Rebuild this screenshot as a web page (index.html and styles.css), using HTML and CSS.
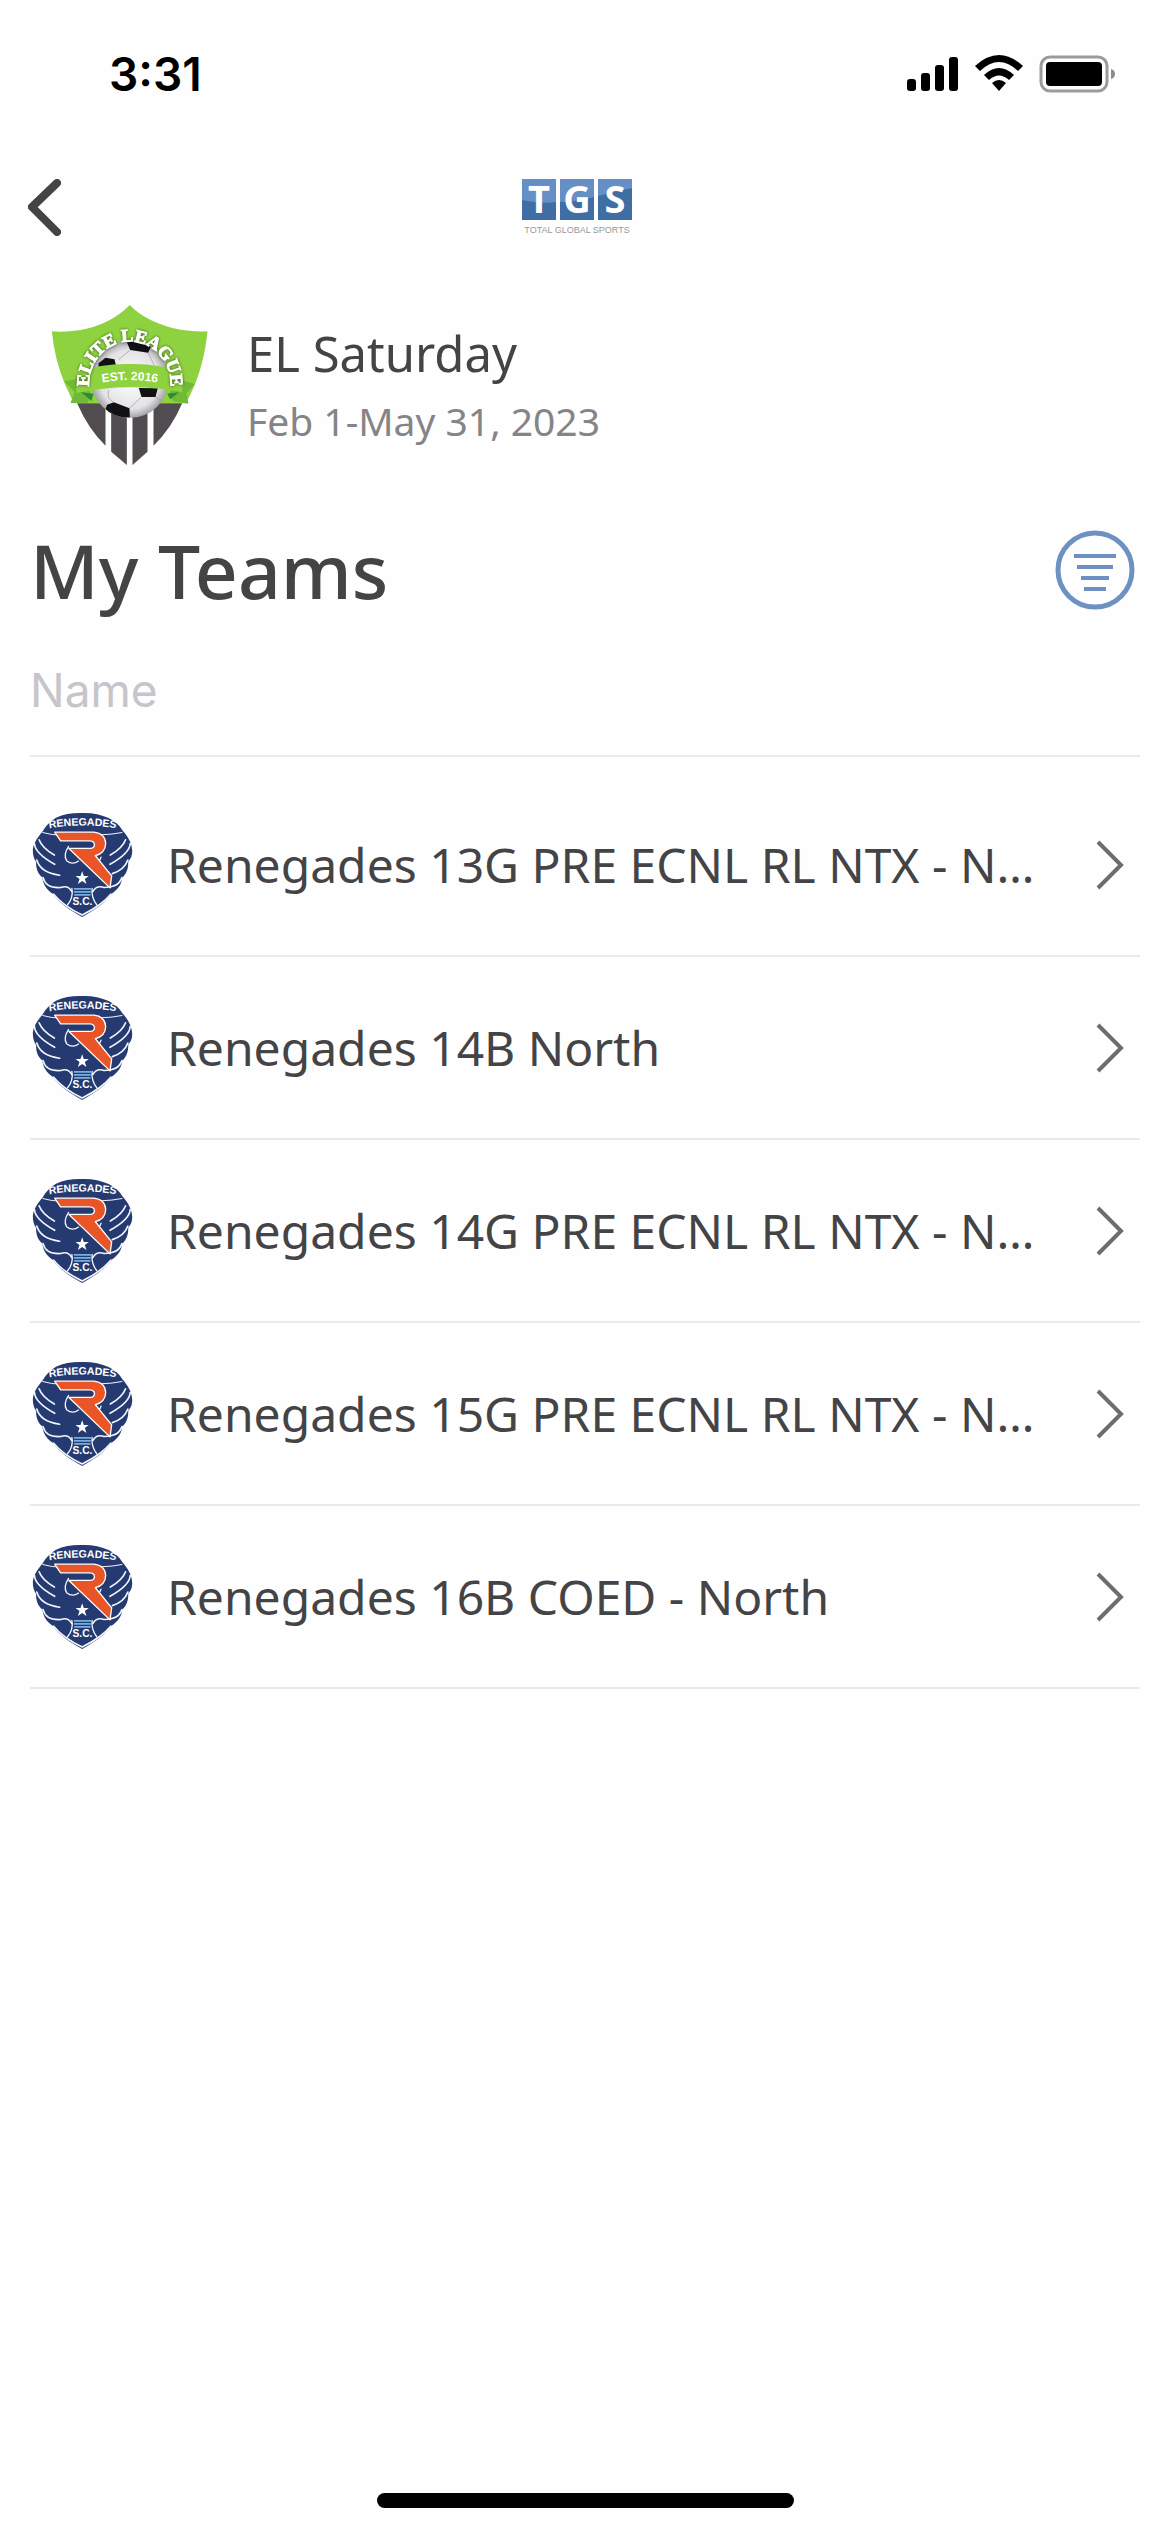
FILE: index.html
```html
<!DOCTYPE html>
<html lang="en">
<head>
    <meta charset="utf-8">
    <meta name="viewport" content="width=device-width, initial-scale=1">
    <title>My Teams</title>
    <link rel="stylesheet" href="styles.css">
</head>
<body>
    <!-- shared icons -->
    <svg class="sprite" aria-hidden="true">
        <symbol id="crest" viewBox="36 60 304 320">
            <path d="M187 63C216 62 244 68 267 78C285 87 299 98 309 116C323 131 337 153 338 176C339 190 334 202 326 210C327 232 319 248 308 258C306 279 294 295 277 306C254 337 222 357 187 377C152 358 120 337 98 307C80 295 69 279 67 258C54 247 47 231 48 211C37 195 35 172 43 155C50 139 60 128 68 118C75 103 89 89 108 77C132 66 160 62 187 63Z" fill="#253a70"/>
            <g fill="none" stroke="#f3f6fc" stroke-width="5" stroke-linecap="round">
                <path d="M68 122Q120 137 184 125Q246 134 307 122" stroke-width="3"/>
                <path d="M43 155Q44 184 104 218M50 205Q61 243 119 251M69 258Q77 291 123 288Q144 280 156 300"/>
                <path d="M57 144Q66 169 103 190"/>
                <path d="M332 155Q331 184 271 218M325 205Q314 235 278 246M307 258Q298 288 253 288Q231 280 219 300"/>
                <path d="M318 144Q309 169 272 190"/>
                <path d="M101 308Q128 342 187 371Q246 342 274 308"/>
                <path d="M156 291Q161 318 143 340M217 291Q214 318 231 340" stroke-width="4"/>
                <path d="M146 164Q129 190 140 207Q158 221 176 208" stroke-width="4"/>
                <path d="M220 209Q240 214 244 196" stroke-width="4"/>
            </g>
            <path d="M104 121H222Q256 124 258 155Q257 184 227 192L276 253L271 289L147 170H213Q224 168 224 158Q223 148 211 147H122Z" fill="#ea5527" stroke="#fff" stroke-width="4" stroke-linejoin="round"/>
            <path d="M187 239L192 253H207L195 262L200 277L187 268L174 277L179 262L167 253H182Z" fill="#fff"/>
            <path d="M162 292H214M162 301H213M163 310H212" stroke="#77aee0" stroke-width="5"/>
            <path id="crestArc" d="M70 112Q187 90 307 112" fill="none"/>
            <text class="crest-name"><textPath href="#crestArc" startOffset="50%">RENEGADES</textPath></text>
            <text class="crest-sc" x="188" y="341">S.C.</text>
        </symbol>
        <symbol id="chevron" viewBox="0 0 28 50">
            <path d="M2 2L25 25L2 48" fill="none" stroke="#6d6c6e" stroke-width="4"/>
        </symbol>
    </svg>

    <div class="screen">
        <div class="status">
            <span class="clock">3:31</span>
            <svg class="status-icons" viewBox="907 54 209 40" role="img" aria-label="Signal, wifi and battery">
                <rect x="907" y="79" width="9" height="12" rx="3"/>
                <rect x="921" y="73" width="9" height="18" rx="3"/>
                <rect x="935" y="65" width="9" height="26" rx="3"/>
                <rect x="949" y="57" width="9" height="34" rx="3"/>
                <path d="M975 66Q999 44 1023 66L1018 71Q999 53 980 71ZM984 75Q999 61 1014 75L1009 80Q999 71 989 80ZM992 83Q999 77 1006 83L999 91Z"/>
                <rect x="1041" y="57" width="66" height="34" rx="9" fill="none" stroke="#9b9b9b" stroke-width="3"/>
                <rect x="1046" y="62" width="56" height="24" rx="4"/>
                <path d="M1111 69Q1115 70 1115 74Q1115 78 1111 79Z" fill="#8b8b8b"/>
            </svg>
        </div>

        <header class="topbar">
            <button class="back" type="button" aria-label="Back">
                <svg viewBox="0 0 33 57"><path d="M29 4L4 28L29 53" fill="none" stroke="#444345" stroke-width="8" stroke-linecap="round" stroke-linejoin="round"/></svg>
            </button>
            <svg class="tgs" viewBox="0 0 112 56" role="img" aria-label="Total Global Sports">
                <path d="M1 0H35V41H1ZM39 0H73V41H39ZM77 0H111V41H77Z" fill="#3f6ea5"/>
                <path d="M1 0H35V23Q18 25 1 21ZM39 0H73V18Q56 23 39 23ZM77 0H111V9Q95 12 77 17Z" fill="#668fc6"/>
                <text class="tgs-letter" x="18" y="34">T</text>
                <text class="tgs-letter" x="56" y="34">G</text>
                <text class="tgs-letter" x="94" y="34">S</text>
                <text class="tgs-name" x="56" y="54">TOTAL GLOBAL SPORTS</text>
            </svg>
        </header>

        <section class="event">
            <svg class="event-logo" viewBox="60 42 476 486" role="img" aria-label="Elite League, est. 2016">
                <defs>
                    <radialGradient id="ball" cx=".5" cy=".5" r=".55">
                        <stop offset="0" stop-color="#fff"/>
                        <stop offset=".7" stop-color="#e3e3e6"/>
                        <stop offset="1" stop-color="#88888b"/>
                    </radialGradient>
                    <clipPath id="ballClip"><circle cx="299" cy="268" r="116"/></clipPath>
                </defs>
                <path d="M299 45Q240 105 146 121Q103 127 65 124Q73 208 104 282L131 340H467Q520 246 532 124Q478 126 424 113Q342 91 299 45Z" fill="#8ed33f"/>
                <path d="M141 340H226V467Q175 419 141 340ZM243 340H290V525L243 485ZM307 340H352V485L307 525ZM370 340H456Q424 416 370 467Z" fill="#504c50"/>
                <path d="M103 274L150 265L184 312L172 339H121L133 307ZM495 282L446 269L416 312L428 333L475 341L469 309Z" fill="#70ba38"/>
                <path d="M153 307L190 311L184 333ZM447 307L411 311L420 328Z" fill="#2d8b3a"/>
                <circle cx="299" cy="268" r="116" fill="url(#ball)"/>
                <g clip-path="url(#ballClip)">
                    <path d="M290 157L311 143L365 164L354 188L300 180ZM205 220L226 203L253 208L259 233H205ZM326 294L383 295L376 321H334ZM231 344L251 337L298 355L299 382L252 384L226 356ZM380 360L414 323V365Z" fill="#111013"/>
                    <path d="M300 180L265 209M354 188L372 226M236 300Q227 326 251 337M334 321L298 355M376 321L397 333M251 151L290 157" fill="none" stroke="#999" stroke-width="2"/>
                </g>
                <path d="M140 245Q218 220 299 222Q382 220 459 247L456 307Q377 291 299 292Q219 292 139 309Z" fill="#8ed33f"/>
                <path id="arcTop" d="M177 290V281A122 126 0 0 1 421 281V290" fill="none"/>
                <path id="arcRibbon" d="M190 283Q299 257 408 283" fill="none"/>
                <text class="el-name"><textPath href="#arcTop" startOffset="50%">ELITE LEAGUE</textPath></text>
                <text class="el-year"><textPath href="#arcRibbon" startOffset="50%">EST. 2016</textPath></text>
            </svg>
            <div>
                <h2 class="event-title">EL Saturday</h2>
                <p class="event-dates">Feb 1-May 31, 2023</p>
            </div>
        </section>

        <main class="teams">
            <div class="teams-head">
                <h1>My Teams</h1>
                <button class="filter" type="button" aria-label="Filter">
                    <svg viewBox="0 0 80 80" fill="none" stroke="#6d91c3">
                        <circle cx="40" cy="40" r="37" stroke-width="5"/>
                        <path d="M19 26H61M22 37H58M26 48H54M29 59H51" stroke-width="4"/>
                    </svg>
                </button>
            </div>
            <input class="search" type="text" placeholder="Name" aria-label="Name">

            <ul class="team-list">
                <li><a class="team" href="#">
                    <svg class="crest"><use href="#crest"/></svg>
                    <span class="team-name">Renegades 13G PRE ECNL RL NTX - North</span>
                    <svg class="chevron"><use href="#chevron"/></svg>
                </a></li>
                <li><a class="team" href="#">
                    <svg class="crest"><use href="#crest"/></svg>
                    <span class="team-name">Renegades 14B North</span>
                    <svg class="chevron"><use href="#chevron"/></svg>
                </a></li>
                <li><a class="team" href="#">
                    <svg class="crest"><use href="#crest"/></svg>
                    <span class="team-name">Renegades 14G PRE ECNL RL NTX - North</span>
                    <svg class="chevron"><use href="#chevron"/></svg>
                </a></li>
                <li><a class="team" href="#">
                    <svg class="crest"><use href="#crest"/></svg>
                    <span class="team-name">Renegades 15G PRE ECNL RL NTX - North</span>
                    <svg class="chevron"><use href="#chevron"/></svg>
                </a></li>
                <li><a class="team" href="#">
                    <svg class="crest"><use href="#crest"/></svg>
                    <span class="team-name">Renegades 16B COED - North</span>
                    <svg class="chevron"><use href="#chevron"/></svg>
                </a></li>
            </ul>
        </main>

        <div class="home-bar"></div>
    </div>
</body>
</html>
```
FILE: styles.css
```css
* {
    box-sizing: border-box;
}

body {
    margin: 0;
    background: #fefefe;
    color: #444345;
    font-family: "Noto Sans", sans-serif;
}

h1, h2, p, ul {
    margin: 0;
    padding: 0;
    font-weight: normal;
}

button {
    padding: 0;
    border: none;
    background: none;
    cursor: pointer;
}

svg {
    display: block;
    flex: none;
}

.sprite {
    position: absolute;
    width: 0;
    height: 0;
}

.screen {
    display: flex;
    flex-direction: column;
    min-height: 100vh;
}

/* status bar */
.status {
    display: flex;
    justify-content: space-between;
    align-items: center;
    height: 148px;
    padding: 0 54px 0 109px;
    color: #000;
}

.clock {
    font: 600 46px/56px Inter, sans-serif;
}

.status-icons {
    width: 209px;
    height: 40px;
}

/* header */
.topbar {
    display: grid;
    grid-template-columns: 1fr auto 1fr;
    align-items: center;
    height: 118px;
    padding: 0 44px 0 28px;
}

.back {
    justify-self: start;
}

.back svg {
    width: 33px;
    height: 57px;
}

.tgs {
    width: 112px;
    height: 56px;
}

.tgs-letter {
    font: bold 38px "Noto Sans", sans-serif;
    fill: #fff;
    text-anchor: middle;
}

.tgs-name {
    font: 9px "Liberation Sans", sans-serif;
    fill: #98989b;
    text-anchor: middle;
}

/* event */
.event {
    display: flex;
    align-items: center;
    gap: 38px;
    padding: 38px 50px 0;
}

.event-logo {
    width: 159px;
    height: 162px;
}

.el-name {
    font: bold 54px "Liberation Serif", serif;
    fill: #fff;
    stroke: #fff;
    stroke-width: 3px;
    text-anchor: middle;
    filter: drop-shadow(0 0 5px rgba(0, 0, 0, .6));
}

.el-year {
    font: bold 36px "Liberation Sans Narrow", "Liberation Sans", sans-serif;
    fill: #fff;
    text-anchor: middle;
}

.event-title {
    font-size: 49px;
    line-height: 72px;
}

.event-dates {
    color: #858486;
    font-size: 39px;
    line-height: 64px;
}

/* teams */
.teams {
    padding: 52px 30px 0;
}

.teams-head {
    display: flex;
    justify-content: space-between;
    align-items: center;
    height: 104px;
    padding-right: 5px;
}

h1 {
    font-size: 75px;
    font-weight: 500;
    line-height: 104px;
}

.filter svg {
    width: 80px;
    height: 80px;
}

.search {
    display: block;
    width: 100%;
    height: 135px;
    padding: 2px 0 0;
    border: none;
    border-bottom: 2px solid #e9e8eb;
    background: none;
    color: #444345;
    font: 46px Inter, sans-serif;
    outline: none;
}

.search::placeholder {
    color: #c6c5cb;
    opacity: 1;
}

.team-list {
    padding-top: 17px;
    list-style: none;
}

.team {
    display: flex;
    align-items: center;
    height: 183px;
    padding: 0 16px 0 2px;
    border-bottom: 2px solid #e9e8eb;
    color: inherit;
    text-decoration: none;
}

.crest {
    width: 101px;
    height: 106px;
}

.crest-name {
    font: bold 32px "Liberation Sans", sans-serif;
    fill: #fff;
    text-anchor: middle;
}

.crest-sc {
    font: bold 31px "Liberation Sans", sans-serif;
    fill: #fff;
    text-anchor: middle;
}

.team-name {
    flex: 1;
    min-width: 0;
    margin: 0 46px 0 34px;
    overflow: hidden;
    font-size: 48px;
    line-height: 72px;
    text-overflow: ellipsis;
    white-space: nowrap;
}

.chevron {
    width: 28px;
    height: 50px;
}

.home-bar {
    width: 417px;
    height: 15px;
    margin: auto auto 24px;
    border-radius: 8px;
    background: #000;
}
```
